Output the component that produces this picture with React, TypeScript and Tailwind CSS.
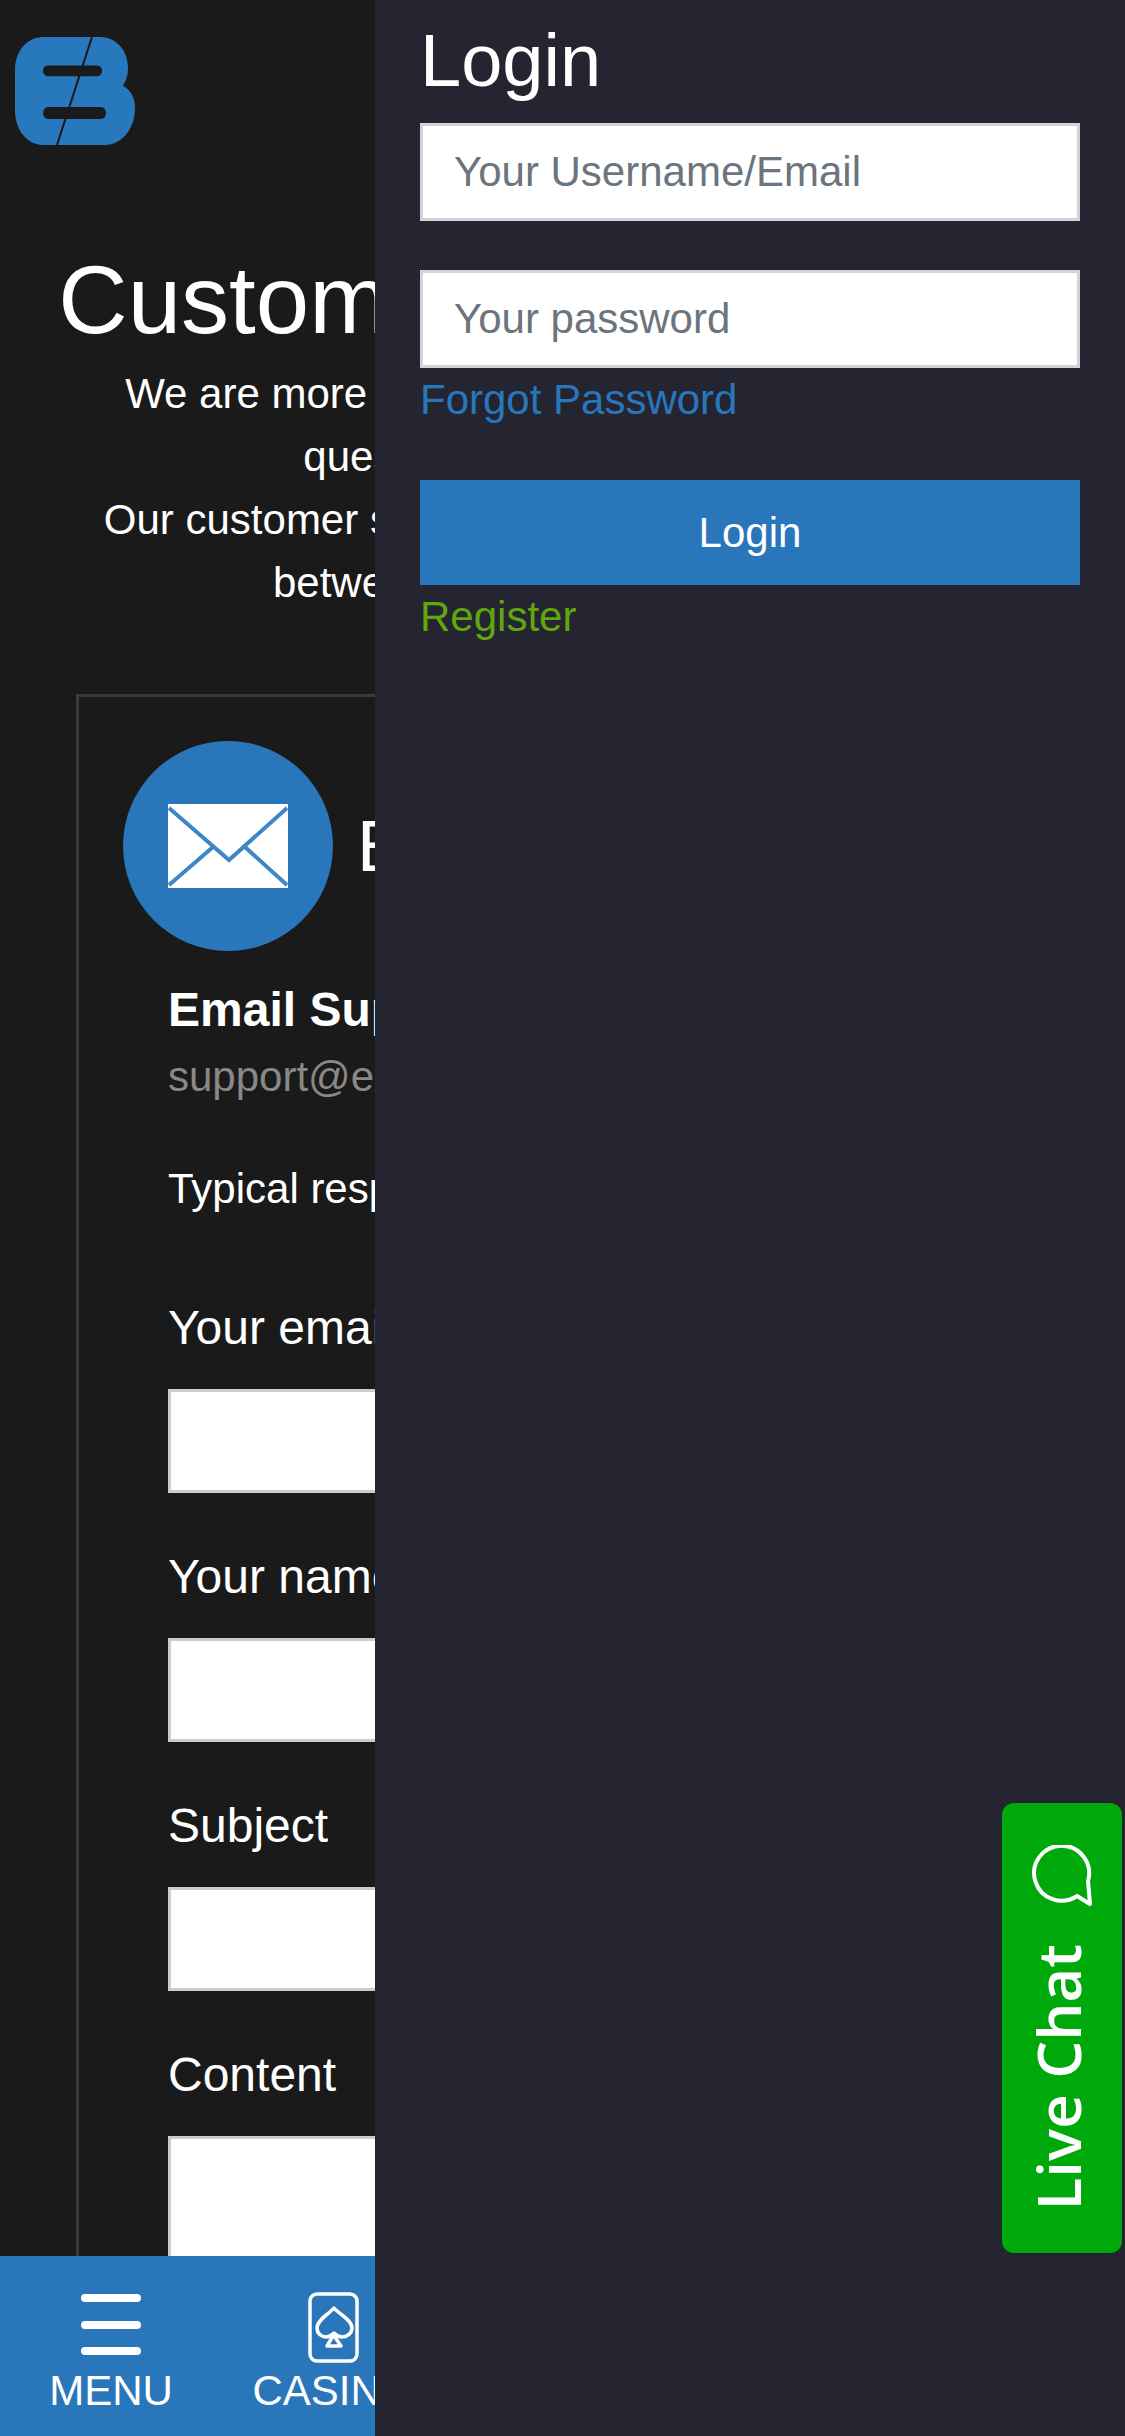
const FONT = "font-['Liberation_Sans',Arial,sans-serif]";

function Logo() {
  return (
    <svg width={120} height={108} viewBox="0 0 120 91" preserveAspectRatio="none">
      <path
        d="M28 0H85C102 0 113 12 113 26C113 33 111 37 108 41C116 45 120 51 120 60C120 78 106 91 90 91H28C12 91 0 78 0 62V28C0 12 12 0 28 0Z"
        fill="#2878bd"
      />
      <rect x="28" y="24" width="59" height="9" rx="4.5" fill="#1a1a1a" />
      <rect x="28" y="59" width="63" height="10" rx="5" fill="#1a1a1a" />
      <path d="M77 0L42 91" stroke="#1a1a1a" strokeWidth="2" />
    </svg>
  );
}

function EnvelopeIcon() {
  return (
    <svg width={120} height={84} viewBox="0 0 120 84">
      <rect width="120" height="84" fill="#fff" />
      <path d="M1 4L61 56L119 4M1 81L45 43M119 81L77 43" fill="none" stroke="#3f86c5" strokeWidth="4" />
    </svg>
  );
}

function CardIcon() {
  return (
    <svg width={51} height={71} viewBox="0 0 51 71" fill="none" stroke="#fff" strokeWidth="3.5" strokeLinejoin="round">
      <rect x="2" y="2" width="47" height="67" rx="7" />
      <path d="M26 16C21 22 9 28 9 36C9 42 14 45 18 45C21 45 24 43 26 41C28 43 31 45 34 45C38 45 44 42 44 36C44 28 31 22 26 16Z" />
      <path d="M25.5 43L19 54H33Z" />
    </svg>
  );
}

function ChatIcon() {
  return (
    <svg width={60} height={61} viewBox="0 0 60 61" fill="none" stroke="#fff" strokeWidth="4" strokeLinejoin="round">
      <path d="M56 36A27.5 27.5 0 1 0 45 51L58 59Z" />
    </svg>
  );
}

function Field({ label, tall }: { label: string; tall?: boolean }) {
  return (
    <div className="mb-[52px]">
      <div className="mb-[30px] text-[48px] leading-[63px] text-white">{label}</div>
      <div className={tall ? "h-[240px] w-full border-[3px] border-[#cccccc] bg-white" : "h-[104px] w-full border-[3px] border-[#cccccc] bg-white"} />
    </div>
  );
}

function SupportPage() {
  return (
    <div className="w-[1125px]">
      <div className="pl-[15px] pt-[37px]">
        <Logo />
      </div>
      <h1 className="mt-[101px] text-center text-[96px] leading-[108px] text-white">Customer Service Desk</h1>
      <p className="mt-[8px] px-[60px] text-center text-[42px] leading-[63px] text-white">
        We are more than happy to answer any of your
        <br />
        questions you might ask us.
        <br />
        Our customer service team is available every day
        <br />
        between 8:00am and 10:00pm.
      </p>
      <div className="mx-[76px] mt-[80px] border-[3px] border-[#3a3a3a] p-[44px]">
        <div className="flex items-center gap-[24px]">
          <div className="flex h-[210px] w-[210px] shrink-0 items-center justify-center rounded-full bg-[#2976bb]">
            <EnvelopeIcon />
          </div>
          <div className="text-[72px] leading-[86px] text-white">Email</div>
        </div>
        <div className="pl-[45px]">
          <div className="mt-[27px] text-[48px] font-bold leading-[63px] text-white">Email Support</div>
          <div className="mt-[4px] text-[42px] leading-[63px] text-[#888888]">support@example.com</div>
          <div className="mt-[49px] text-[42px] leading-[63px] text-white">Typical response time</div>
          <div className="mt-[76px]">
            <Field label="Your email" />
            <Field label="Your name" />
            <Field label="Subject" />
            <Field label="Content" tall />
          </div>
        </div>
      </div>
    </div>
  );
}

function BottomNav() {
  return (
    <nav className="absolute inset-x-0 bottom-0 flex h-[180px] bg-[#2976bb] text-white">
      <div className="flex w-[222px] flex-col items-center pt-[38px]">
        <div className="flex h-[61px] w-[60px] flex-col justify-between">
          <div className="h-[8px] rounded-full bg-white" />
          <div className="h-[8px] rounded-full bg-white" />
          <div className="h-[8px] rounded-full bg-white" />
        </div>
        <div className="mt-[12px] text-[42px] leading-[48px]">MENU</div>
      </div>
      <div className="flex w-[222px] flex-col items-center pt-[36px]">
        <CardIcon />
        <div className="mt-[4px] text-[42px] leading-[48px]">CASINO</div>
      </div>
    </nav>
  );
}

function LoginDrawer() {
  return (
    <aside className="absolute inset-y-0 right-0 w-[750px] bg-[#252531] px-[45px] pt-[18px]">
      <h2 className="mb-[19px] text-[74px] leading-[86px] text-white">Login</h2>
      <input
        placeholder="Your Username/Email"
        className="mb-[49px] block h-[98px] w-full border-[3px] border-[#ced4da] bg-white px-[31px] text-[42px] text-[#495057] outline-none placeholder:text-[#6c757d]"
      />
      <input
        placeholder="Your password"
        className="block h-[98px] w-full border-[3px] border-[#ced4da] bg-white px-[31px] text-[42px] text-[#495057] outline-none placeholder:text-[#6c757d]"
      />
      <a className="block text-[42px] leading-[63px] text-[#2976bb]">Forgot Password</a>
      <button className="mt-[49px] block h-[105px] w-full bg-[#2976bb] text-[42px] text-white">Login</button>
      <a className="block text-[42px] leading-[63px] text-[#5fa70d]">Register</a>
    </aside>
  );
}

function LiveChat() {
  return (
    <div className="absolute right-[3px] top-[1803px] flex h-[450px] w-[120px] flex-col items-center rounded-[12px] bg-[#00a90b] pt-[42px] text-white">
      <ChatIcon />
      <span className="mt-[38px] -translate-x-[4px] rotate-180 font-['Open_Sans',sans-serif] text-[60px] font-semibold leading-[60px] [writing-mode:vertical-rl]">
        Live Chat
      </span>
    </div>
  );
}

export default function App() {
  return (
    <div className={`relative h-[2436px] w-[1125px] overflow-hidden bg-[#1a1a1a] ${FONT}`}>
      <SupportPage />
      <BottomNav />
      <LoginDrawer />
      <LiveChat />
    </div>
  );
}
